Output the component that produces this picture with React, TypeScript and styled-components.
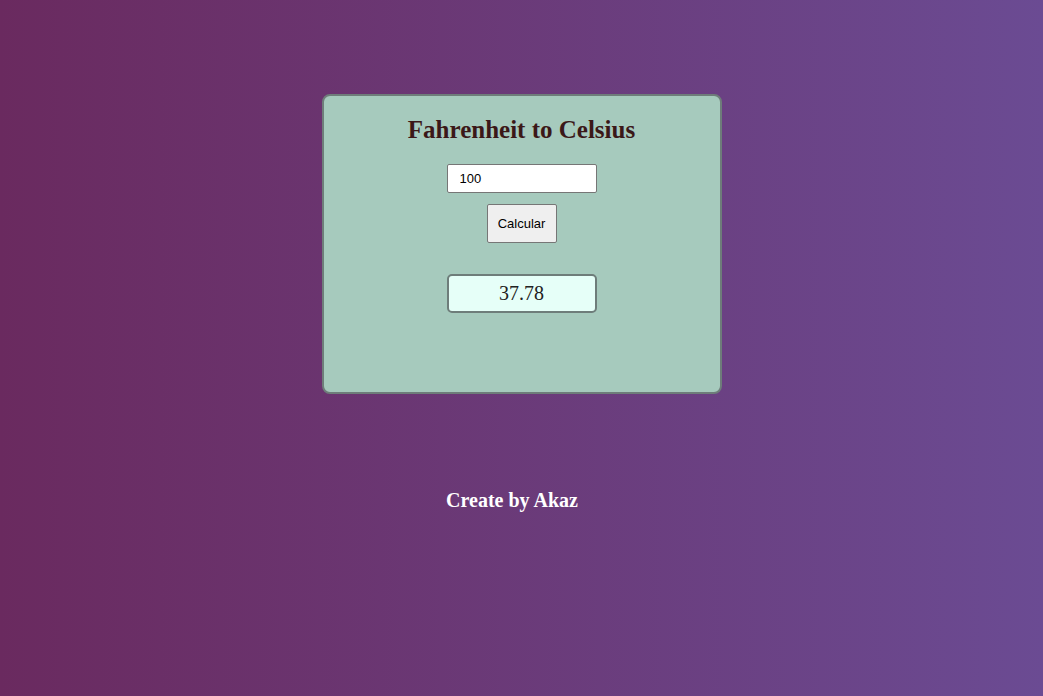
import React, { useState } from "react";
import styled, { createGlobalStyle } from "styled-components";

const GlobalStyle = createGlobalStyle`
  html, body {
    margin: 0;
    padding: 0;
    min-height: 100%;
  }
  body {
    font-family: "Liberation Serif", "Times New Roman", serif;
    background: linear-gradient(to right, #6a2a5f, #6b4b93);
    min-height: 696px;
  }
`;

const Page = styled.div`
  display: flex;
  flex-direction: column;
  align-items: center;
  min-height: 696px;
`;

const Card = styled.div`
  box-sizing: border-box;
  margin-top: 94px;
  width: 400px;
  height: 300px;
  border: 2px solid #6e7d7a;
  border-radius: 8px;
  background: #a6cabd;
  display: flex;
  flex-direction: column;
  align-items: center;
  padding-top: 19px;
`;

const Title = styled.h2`
  margin: 0;
  font-family: "Liberation Serif", "Times New Roman", serif;
  font-weight: bold;
  font-size: 25px;
  line-height: 30px;
  color: #3b1818;
`;

const Input = styled.input`
  box-sizing: border-box;
  margin-top: 19px;
  width: 150px;
  height: 29px;
  border: 1px solid #767676;
  border-radius: 2px;
  padding: 0 11px 0 12px;
  font-family: "Liberation Sans", Arial, sans-serif;
  font-size: 13px;
  color: #000;
  background: #fff;
  outline: none;
`;

const Button = styled.button`
  box-sizing: border-box;
  margin-top: 11px;
  width: 70px;
  height: 39px;
  border: 1px solid #767676;
  border-radius: 2px;
  background: #efefef;
  font-family: "Liberation Sans", Arial, sans-serif;
  font-size: 13px;
  color: #000;
  padding: 0;
  cursor: pointer;
`;

const Result = styled.div`
  box-sizing: border-box;
  margin-top: 31px;
  width: 150px;
  height: 39px;
  border: 2px solid #6e7d7a;
  border-radius: 5px;
  background: #e6fff8;
  display: flex;
  align-items: center;
  justify-content: center;
  font-family: "Liberation Serif", "Times New Roman", serif;
  font-size: 20px;
  color: #222;
`;

const Footer = styled.h3`
  margin: 94px 19px 0 0;
  font-family: "Liberation Serif", "Times New Roman", serif;
  font-weight: bold;
  font-size: 20px;
  line-height: 24px;
  color: #fff;
`;

export default function App() {
  const [value, setValue] = useState("100");
  const [result, setResult] = useState("37.78");

  const calc = () => {
    const f = parseFloat(value);
    if (!isNaN(f)) setResult((((f - 32) * 5) / 9).toFixed(2));
  };

  return (
    <>
      <GlobalStyle />
      <Page>
        <Card>
          <Title>Fahrenheit to Celsius</Title>
          <Input value={value} onChange={(e) => setValue(e.target.value)} />
          <Button onClick={calc}>Calcular</Button>
          <Result>{result}</Result>
        </Card>
        <Footer>Create by Akaz</Footer>
      </Page>
    </>
  );
}
